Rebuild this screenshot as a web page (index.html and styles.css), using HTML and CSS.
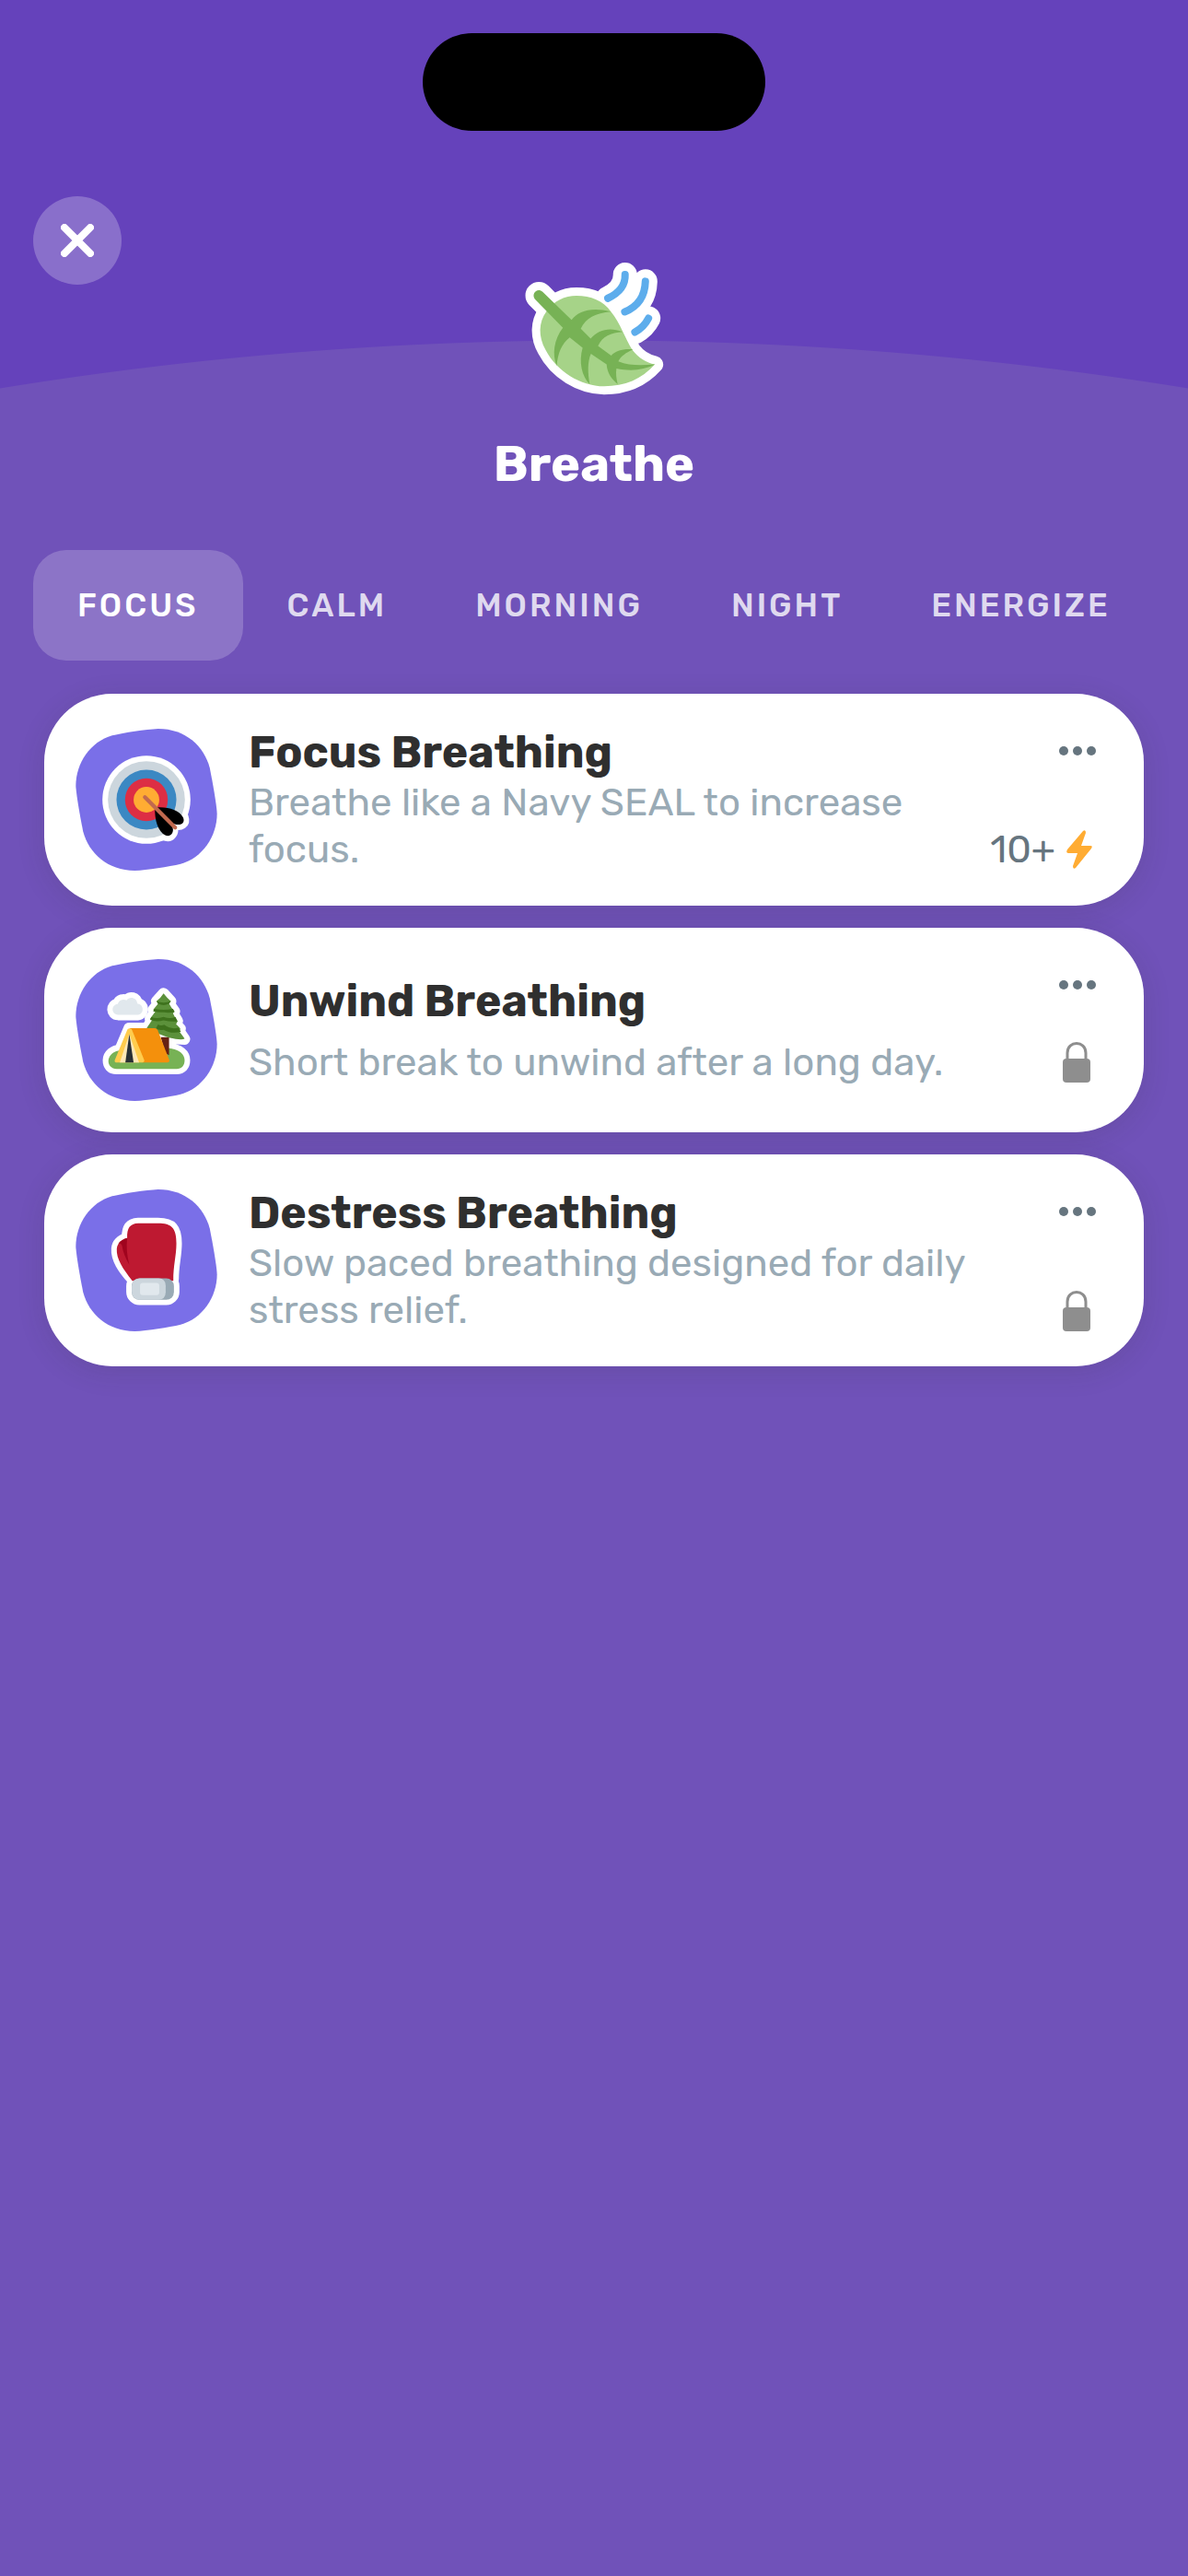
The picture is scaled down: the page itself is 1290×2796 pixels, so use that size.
FILE: index.html
```html
<!DOCTYPE html>
<html lang="en">
<head>
  <meta charset="UTF-8">
  <meta name="viewport" content="width=device-width, initial-scale=1">
  <title>Breathe</title>
  <link rel="stylesheet" href="styles.css">
</head>
<body>
  <div class="island"></div>

  <header>
    <button class="close" aria-label="Close">
      <svg viewBox="0 0 36 36" width="36" height="36">
        <path d="M4 4L32 32M32 4L4 32" fill="none" stroke="#fff" stroke-width="8" stroke-linecap="round"/>
      </svg>
    </button>
    <svg class="leaf" viewBox="55 40 460 440" aria-hidden="true">
      <!-- white sticker edge -->
      <g fill="#fff" stroke="#fff" stroke-width="54" stroke-linecap="round" stroke-linejoin="round">
        <path d="M130 205C155 170 190 154 228 154C275 154 315 170 340 205C372 245 385 290 410 330C430 356 455 370 483 377C440 425 385 448 318 448C240 446 165 400 128 330C103 285 105 240 130 205Z"/>
        <path d="M106 153L140 187" stroke-width="88"/>
        <path d="M386 85Q388 135 330 162M452 107Q450 180 385 206M462 227Q448 255 418 272" fill="none" stroke-width="78"/>
        <path d="M350 165L415 170L400 240L360 210Z"/>
      </g>
      <path fill="#a6d388" d="M130 205C155 170 190 154 228 154C275 154 315 170 340 205C372 245 385 290 410 330C430 356 455 370 483 377C440 425 385 448 318 448C240 446 165 400 128 330C103 285 105 240 130 205Z"/>
      <path fill="#77b255" d="M93 165C80 148 100 126 118 141L212 232C235 203 275 190 340 205C290 210 258 225 242 261L274 293C300 264 335 255 378 271C340 274 312 285 298 317L341 348C355 333 380 325 412 328C390 338 372 350 364 367C400 382 440 380 483 377C445 397 400 399 358 390C355 405 358 425 362 441C342 425 328 405 326 377L275 342C263 370 265 405 271 441C245 415 235 370 248 323L206 289C180 310 167 340 164 381C148 345 155 295 184 258Z"/>
      <path d="M386 85Q388 135 330 162M452 107Q450 180 385 206M462 227Q448 255 418 272" fill="none" stroke="#5dadec" stroke-width="24" stroke-linecap="round"/>
    </svg>
    <h1>Breathe</h1>
  </header>

  <nav>
    <button class="tab active">FOCUS</button>
    <button class="tab">CALM</button>
    <button class="tab">MORNING</button>
    <button class="tab">NIGHT</button>
    <button class="tab">ENERGIZE</button>
  </nav>

  <main>
    <article class="card">
      <svg class="icon" viewBox="36 33 462 464" aria-hidden="true">
        <path class="blob" d="M305 33C395 33 455 90 474 160C482 200 496 275 498 310C498 385 450 455 379 475C340 484 270 495 229 497C139 497 79 440 60 370C52 330 38 255 36 220C36 145 84 75 155 55C194 46 264 35 305 33Z"/>
        <circle cx="267" cy="265" r="144" fill="#fff"/>
        <path d="M295 291C330 287 372 297 387 323C394 342 378 350 361 345L351 353C357 372 346 387 330 382C305 370 293 330 295 291Z" fill="#fff" stroke="#fff" stroke-width="36" stroke-linejoin="round"/>
        <circle cx="267" cy="265" r="126" fill="#ccd6dd"/>
        <circle cx="267" cy="265" r="98" fill="#3b88c3"/>
        <circle cx="267" cy="265" r="70" fill="#dd2e44"/>
        <circle cx="267" cy="265" r="42" fill="#ffac33"/>
        <path d="M295 291C335 287 372 297 387 323C396 344 375 352 357 343L350 350C361 368 348 388 330 382C305 370 293 330 295 291Z"/>
        <path d="M262 257L361 356" stroke="#c1694f" stroke-width="13" stroke-linecap="round"/>
      </svg>
      <div class="text">
        <h2>Focus Breathing</h2>
        <p>Breathe like a Navy SEAL to increase focus.</p>
      </div>
      <div class="side">
        <button class="more" aria-label="More options"><i></i><i></i><i></i></button>
        <div class="badge">
          <span>10+</span>
          <svg viewBox="0 0 28 44" width="28" height="44" aria-hidden="true">
            <path d="M18 2Q21 0 21 4L16 18H26Q29 18 27 21L10 42Q7 44 7 40L12 26H2Q-1 26 1 22Z" fill="#ffac33"/>
          </svg>
        </div>
      </div>
    </article>

    <article class="card short">
      <svg class="icon" viewBox="36 33 462 464" aria-hidden="true">
        <path class="blob" d="M305 33C395 33 455 90 474 160C482 200 496 275 498 310C498 385 450 455 379 475C340 484 270 495 229 497C139 497 79 440 60 370C52 330 38 255 36 220C36 145 84 75 155 55C194 46 264 35 305 33Z"/>
        <g fill="#fff" stroke="#fff" stroke-width="36" stroke-linejoin="round">
          <path d="M174 215C152 214 150 183 173 180C178 165 194 163 202 168C211 153 236 158 237 178C260 180 260 212 240 215Z"/>
          <path d="M323 145L347 171L341 178L359 204L354 211L369 236L364 246L378 261L375 270L392 295L342 292V327C375 328 392 345 392 364C392 382 382 392 366 392H170C150 392 142 380 142 364C142 345 160 332 180 330L210 259H268L286 232L279 228L296 205L289 199L305 179L300 171Z"/>
        </g>
        <path d="M174 215C152 214 150 183 173 180C178 165 194 163 202 168C211 153 236 158 237 178C260 180 260 212 240 215Z" fill="#e1e8ed"/>
        <path d="M170 392C134 392 132 343 174 333C220 321 310 318 350 326C376 330 392 345 392 364C392 382 382 392 366 392Z" fill="#77b255"/>
        <path d="M314 288H341V347L328 340Z" fill="#662113"/>
        <path d="M323 145Q335 160 347 171L341 178Q350 195 359 204L354 211Q361 226 369 236L364 246Q376 256 378 261L375 270L392 293Q384 300 340 290L300 275L268 258L286 232L279 228L296 205L289 199L305 179L300 171Q315 158 323 145Z" fill="#5c913b"/>
        <path d="M300 170Q323 180 347 170L341 179Q323 188 305 179ZM293 196Q323 202 354 196L359 206Q341 210 323 207Q305 208 289 204ZM283 222Q298 230 323 222Q345 230 362 222L369 237Q345 239 323 233Q300 240 279 232ZM305 247Q315 253 325 248Q350 265 371 257L380 271Q345 278 323 264Q310 268 298 260Z" fill="#3e721d"/>
        <path d="M212 259H294Q301 259 304 266L342 364Q343 371 335 371H252Z" fill="#f4900c"/>
        <path d="M205 263Q212 256 219 263L260 364Q261 371 253 371H168Q161 370 164 362Z" fill="#ffcc4d"/>
        <path d="M211 278L243 371H180Z" fill="#ffe8b6"/>
        <path d="M211 278L225 371H198Z" fill="#292f33"/>
      </svg>
      <div class="text">
        <h2>Unwind Breathing</h2>
        <p>Short break to unwind after a long day.</p>
      </div>
      <div class="side">
        <button class="more" aria-label="More options"><i></i><i></i><i></i></button>
        <div class="badge lock">
          <svg viewBox="0 0 30 44" width="30" height="44" role="img" aria-label="Locked">
            <path d="M5 20V12C5 -2 25 -2 25 12V20" fill="none" stroke="#8e8e8e" stroke-width="3"/>
            <rect y="18" width="30" height="26" rx="4" fill="#8e8e8e"/>
          </svg>
        </div>
      </div>
    </article>

    <article class="card">
      <svg class="icon" viewBox="36 33 462 464" aria-hidden="true">
        <path class="blob" d="M305 33C395 33 455 90 474 160C482 200 496 275 498 310C498 385 450 455 379 475C340 484 270 495 229 497C139 497 79 440 60 370C52 330 38 255 36 220C36 145 84 75 155 55C194 46 264 35 305 33Z"/>
        <g fill="#fff" stroke="#fff" stroke-width="36" stroke-linejoin="round">
          <path d="M204 192C203 160 213 145 240 144H305C350 144 365 160 365 210C365 250 355 280 355 327H221C190 292 168 260 170 227C172 208 188 197 204 192Z"/>
          <rect x="219" y="324" width="138" height="69" rx="25"/>
        </g>
        <path d="M204 192C203 160 213 145 240 144H305C350 144 365 160 365 210C365 250 355 280 355 332H221C190 292 168 260 170 227C172 208 188 197 204 192Z" fill="#be1931"/>
        <path d="M204 192Q199 235 211 279Q191 245 187 216Q182 207 175 210Q186 196 204 192Z" fill="#a0041e"/>
        <rect x="219" y="324" width="138" height="70" rx="25" fill="#99aab5"/>
        <path d="M245 324H307Q330 325 330 348V369Q330 393 305 394H245Q219 392 219 366V350Q220 325 245 324Z" fill="#ccd6dd"/>
        <rect x="246" y="339" width="63" height="40" rx="9" fill="#e1e8ed"/>
      </svg>
      <div class="text">
        <h2>Destress Breathing</h2>
        <p>Slow paced breathing designed for daily stress relief.</p>
      </div>
      <div class="side">
        <button class="more" aria-label="More options"><i></i><i></i><i></i></button>
        <div class="badge lock">
          <svg viewBox="0 0 30 44" width="30" height="44" role="img" aria-label="Locked">
            <path d="M5 20V12C5 -2 25 -2 25 12V20" fill="none" stroke="#8e8e8e" stroke-width="3"/>
            <rect y="18" width="30" height="26" rx="4" fill="#8e8e8e"/>
          </svg>
        </div>
      </div>
    </article>
  </main>
</body>
</html>
```
FILE: styles.css
```css
* {
  box-sizing: border-box;
}

body {
  margin: 0;
  padding-top: 36px;
  min-height: 100vh;
  font-family: Rubik, Inter, sans-serif;
  /* big circle rising behind the header */
  background: #7052b9 radial-gradient(circle 4026px at 50% 4395px, #7052b9 4025px, #6542bb 4026px) no-repeat;
}

h1, h2, p {
  margin: 0;
}

button {
  padding: 0;
  border: none;
  background: none;
  font-family: inherit;
  cursor: pointer;
}

.island {
  width: 372px;
  height: 106px;
  margin: 0 auto;
  border-radius: 53px;
  background-color: #000;
}

header {
  display: grid;
  grid-template-columns: 96px 1fr 96px;
  justify-items: center;
  padding: 71px 36px 0;
}

.close {
  display: flex;
  align-items: center;
  justify-content: center;
  width: 96px;
  height: 96px;
  border-radius: 50%;
  background-color: rgba(255, 255, 255, 0.24);
}

.leaf {
  width: 154px;
  height: 147px;
  margin-top: 70px;
}

h1 {
  grid-column: 1 / -1;
  margin-top: 42px;
  font-size: 54px;
  line-height: 64px;
  color: #fff;
}

nav {
  display: flex;
  margin-top: 61px;
  padding: 0 36px;
}

.tab {
  height: 120px;
  padding: 0 48px;
  border-radius: 36px;
  font-size: 35px;
  font-weight: 500;
  letter-spacing: 3px;
  color: rgba(255, 255, 255, 0.8);
}

.tab.active {
  background-color: rgba(255, 255, 255, 0.2);
  color: #fff;
}

main {
  display: flex;
  flex-direction: column;
  gap: 24px;
  padding: 36px 48px;
}

.card {
  display: flex;
  align-items: center;
  gap: 34px;
  padding: 35px 52px 35px 34px;
  border-radius: 74px;
  background-color: #fff;
  box-shadow: 0 6px 30px rgba(50, 50, 50, 0.14);
}

.icon {
  flex: none;
  width: 154px;
  height: 154px;
  margin: -1px 0;
}

.blob {
  fill: #7a6fe8;
}

.text {
  flex: 1;
}

h2 {
  font-size: 48px;
  line-height: 58px;
  color: #2f2f2f;
}

.short h2 {
  margin-bottom: 12px;
}

p {
  font-size: 42px;
  line-height: 51px;
  color: #99aab5;
}

.side {
  align-self: stretch;
  display: flex;
  flex-direction: column;
  justify-content: space-between;
  align-items: flex-end;
}

.more {
  display: flex;
  align-items: center;
  gap: 5px;
  height: 54px;
}

.more i {
  width: 10px;
  height: 10px;
  border-radius: 50%;
  background-color: #66757f;
}

.badge {
  display: flex;
  align-items: center;
  gap: 12px;
  padding: 0 4px 4px 0;
  font-size: 42px;
  line-height: 44px;
  color: #66757f;
}

.badge.lock {
  padding: 0 6px 3px 0;
}

.short .badge.lock {
  padding-bottom: 19px;
}
```
